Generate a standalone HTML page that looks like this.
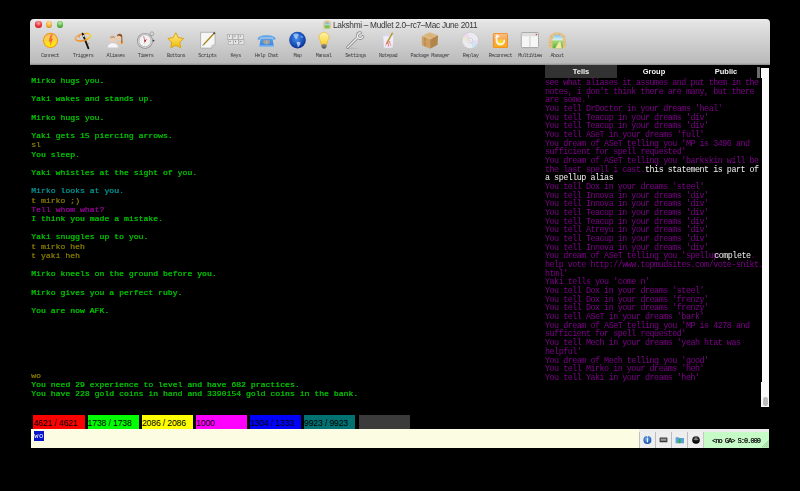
<!DOCTYPE html>
<html><head><meta charset="utf-8">
<style>
*{margin:0;padding:0;box-sizing:border-box}
html,body{width:800px;height:491px;background:#000;overflow:hidden;position:relative;font-family:"Liberation Sans",sans-serif}
.abs{position:absolute}
#win{position:absolute;left:30px;top:19px;width:740px;height:429px;background:#000}
#tb{position:absolute;left:30.3px;top:18.8px;width:739.3px;height:46px;border-radius:4px 4px 0 0;
 background:linear-gradient(#eeeeee 0,#e4e4e4 3px,#d0d0d0 22px,#bababa 44px,#8a8a8a 46px)}
#title{position:absolute;left:332.8px;top:20.4px;height:10px;line-height:10px;font-size:8.3px;letter-spacing:-0.3px;color:#383838;will-change:transform;white-space:nowrap}
.tl{position:absolute;top:21.4px;width:6.4px;height:6.4px;border-radius:50%}
.lbl{position:absolute;top:51.5px;font-family:"Liberation Mono",monospace;font-size:5.2px;letter-spacing:-0.52px;line-height:8px;color:#3c3c3c;white-space:nowrap;transform:translateX(-50%)}
#con{position:absolute;left:31px;top:76px;font-family:"Liberation Mono",monospace;font-size:8.1px;letter-spacing:0.025px;line-height:9.2px;color:#00ba00;white-space:pre;will-change:transform}
#con span,#con{text-shadow:0.4px 0 0 currentColor}
#rp{position:absolute;left:545.4px;top:79px;font-family:"Liberation Mono",monospace;font-size:8.4px;letter-spacing:-0.48px;line-height:8.667px;color:#7c0088;white-space:pre;will-change:transform}
.g{color:#00c000}.c{color:#008a8a}.o{color:#7c7200}.p{color:#8c008c}
#rp .w{color:#f0f0f0}.w{color:#fff}
.tab{position:absolute;top:65px;height:13px;width:72px;text-align:center;font-size:7.5px;font-weight:bold;color:#f4f4f4;line-height:14px;will-change:transform}
.gauge{position:absolute;top:415px;height:13.7px;width:51.3px;font-size:8.7px;letter-spacing:-0.17px;line-height:16px;color:#000;white-space:nowrap;overflow:hidden}
</style></head><body>
<div id="win"></div>
<div id="tb"></div>
<div class="tl" style="left:35.3px;background:radial-gradient(circle at 50% 30%,#ffb0b0,#e8303a 55%,#b01820)"></div>
<div class="tl" style="left:46px;background:radial-gradient(circle at 50% 30%,#ffe0a0,#f0b030 55%,#b07818)"></div>
<div class="tl" style="left:56.8px;background:radial-gradient(circle at 50% 30%,#c0f0b0,#58b840 55%,#2a7a1a)"></div>
<div id="title">Lakshmi – Mudlet 2.0–rc7–Mac June 2011</div>

<svg class="abs" style="left:0;top:0" width="800" height="70" viewBox="0 0 800 70">
<defs>
<linearGradient id="gCon" x1="0" y1="0" x2="0" y2="1"><stop offset="0" stop-color="#f7c57a"/><stop offset="0.5" stop-color="#fbd040"/><stop offset="1" stop-color="#fff000"/></linearGradient>
<radialGradient id="gGlobe" cx="0.45" cy="0.4" r="0.62"><stop offset="0" stop-color="#4a90e8"/><stop offset="0.6" stop-color="#1c56c0"/><stop offset="1" stop-color="#0a2a8a"/></radialGradient>
<linearGradient id="gStar" x1="0" y1="0" x2="0" y2="1"><stop offset="0" stop-color="#fde88e"/><stop offset="0.55" stop-color="#f8d040"/><stop offset="1" stop-color="#f0c000"/></linearGradient>
<linearGradient id="gBulb" x1="0" y1="0" x2="0" y2="1"><stop offset="0" stop-color="#fff4b0"/><stop offset="0.6" stop-color="#fae060"/><stop offset="1" stop-color="#f6cc30"/></linearGradient>
<linearGradient id="gRec" x1="0" y1="0" x2="0" y2="1"><stop offset="0" stop-color="#f8c08a"/><stop offset="0.5" stop-color="#f6a448"/><stop offset="1" stop-color="#f8b020"/></linearGradient>
<radialGradient id="gRecY" cx="0.5" cy="0.7" r="0.6"><stop offset="0" stop-color="#f8f000"/><stop offset="1" stop-color="#f8c040"/></radialGradient>
<radialGradient id="gCD" cx="0.5" cy="0.5" r="0.5"><stop offset="0" stop-color="#f4f4f4"/><stop offset="0.5" stop-color="#e0d8ec"/><stop offset="0.8" stop-color="#f0e8d8"/><stop offset="1" stop-color="#c8c8d0"/></radialGradient>
<linearGradient id="gBox" x1="0" y1="0" x2="1" y2="1"><stop offset="0" stop-color="#dcb070"/><stop offset="1" stop-color="#a8783c"/></linearGradient>
<linearGradient id="gSky" x1="0" y1="0" x2="0" y2="1"><stop offset="0" stop-color="#58a8e8"/><stop offset="0.45" stop-color="#b8e0f0"/><stop offset="0.55" stop-color="#70c040"/><stop offset="1" stop-color="#88c850"/></linearGradient>
<linearGradient id="gSky2" x1="0" y1="0" x2="0" y2="1"><stop offset="0" stop-color="#7cc4f0"/><stop offset="0.35" stop-color="#d4eef4"/><stop offset="0.5" stop-color="#9cd870"/><stop offset="1" stop-color="#58b038"/></linearGradient>
<linearGradient id="gRing" x1="0" y1="0" x2="1" y2="0"><stop offset="0" stop-color="#f8a018"/><stop offset="0.5" stop-color="#f48420"/><stop offset="1" stop-color="#f8d810"/></linearGradient>
<linearGradient id="gPhone" x1="0" y1="0" x2="0" y2="1"><stop offset="0" stop-color="#5aa0ec"/><stop offset="1" stop-color="#3a84e0"/></linearGradient>
</defs>
<!-- title icon arch -->
<path d="M323.2 28.6 V24.5 A3.9 4.2 0 0 1 331 24.5 V28.6 Z" fill="#e2c890"/>
<path d="M324.7 28.6 V25 A2.4 2.8 0 0 1 329.5 25 V28.6 Z" fill="url(#gSky)"/>
<!-- Connect -->
<circle cx="50.5" cy="40.4" r="7.6" fill="#f09a18"/>
<circle cx="50.5" cy="40.4" r="6.5" fill="url(#gCon)"/>
<path d="M50.6 34.4 L52.6 34.4 L51.4 38.6 L53 38.6 L50 46.4 L50.4 41.4 L48.6 41.4 Z" fill="#e86a28" opacity="0.9"/>
<!-- Triggers -->
<path d="M75.43 39.09 A7.80 3.30 -14 0 1 90.57 35.31" fill="none" stroke="url(#gRing)" stroke-width="1.5" opacity="0.8"/>
<line x1="82.6" y1="33.6" x2="88.4" y2="48.4" stroke="#141414" stroke-width="1.8" stroke-linecap="round"/>
<line x1="83.3" y1="35.3" x2="83.9" y2="36.8" stroke="#f4f4f4" stroke-width="1.5"/>
<path d="M90.57 35.31 A7.80 3.30 -14 0 1 75.43 39.09" fill="none" stroke="url(#gRing)" stroke-width="1.6"/>
<circle cx="79.2" cy="36.8" r="0.75" fill="#f07030"/><circle cx="88.6" cy="43.6" r="0.65" fill="#f07030"/>
<!-- Aliases -->
<path d="M116.8 44.2 Q117 40.6 120 40.4 Q123.8 40.6 124.4 44.2 Z" fill="#ecc49a"/>
<ellipse cx="119.5" cy="37" rx="2.5" ry="2.9" fill="#f2cca6"/>
<path d="M116.9 36.6 Q117 33.8 119.6 33.8 Q122.4 33.9 122.3 36.8 L122.4 43.2 L121.2 43.4 L121.4 37.6 Q120.6 35.6 118.6 35.8 Q117.4 36 116.9 36.6 Z" fill="#8c5430"/>
<path d="M107.8 47.4 Q108 43.4 112.7 43.2 Q117.8 43.4 118.2 47.4 Z" fill="#f6f6fa"/>
<ellipse cx="112.6" cy="38.9" rx="2.5" ry="3.1" fill="#f2cca8"/>
<path d="M110.1 38.4 Q110.2 35.6 112.7 35.7 Q115.2 35.7 115.1 38.4 Q113.6 37 110.1 38.4Z" fill="#c8a07a"/>
<!-- Timers -->
<circle cx="151.9" cy="33.7" r="1.9" fill="none" stroke="#a0a0a0" stroke-width="0.9"/>
<circle cx="145" cy="40.8" r="7.9" fill="#8c8c8c"/>
<circle cx="145" cy="40.8" r="7.2" fill="#d4d4d4"/>
<circle cx="145" cy="40.8" r="6.2" fill="#a8a8a8"/>
<circle cx="145" cy="40.8" r="5.7" fill="#f4f2f2"/>
<g stroke="#c8c8c8" stroke-width="0.4"><line x1="145" y1="35.6" x2="145" y2="36.6"/><line x1="145" y1="45" x2="145" y2="46"/><line x1="139.8" y1="40.8" x2="140.8" y2="40.8"/><line x1="149.2" y1="40.8" x2="150.2" y2="40.8"/></g>
<line x1="145" y1="40.8" x2="143.6" y2="36.4" stroke="#c02030" stroke-width="0.6"/>
<line x1="145" y1="40.8" x2="146.6" y2="39.4" stroke="#c02030" stroke-width="0.8"/>
<line x1="145" y1="40.8" x2="144.2" y2="43.6" stroke="#d05060" stroke-width="0.4"/>
<circle cx="145" cy="40.8" r="0.9" fill="#b01020"/>
<circle cx="153.5" cy="40.6" r="0.9" fill="#333"/>
<!-- Buttons star -->
<path d="M175.75 32.70 L178.22 37.60 L183.64 38.44 L179.74 42.30 L180.63 47.71 L175.75 45.20 L170.87 47.71 L171.76 42.30 L167.86 38.44 L173.28 37.60 Z" fill="url(#gStar)" stroke="#d8a200" stroke-width="0.9" stroke-linejoin="round"/>
<!-- Scripts -->
<path d="M200.6 32.3 H215 V44.6 L211.4 48.1 H200.6 Z" fill="#f6f6f6" stroke="#a2a2a2" stroke-width="0.7"/>
<path d="M211.4 48.1 Q211.8 45.6 215 44.6 Q212.6 44.2 211.4 45.2 Z" fill="#dcdcdc" stroke="#b0b0b0" stroke-width="0.3"/>
<line x1="203.6" y1="44.6" x2="214.2" y2="33.2" stroke="#c8a030" stroke-width="1.5"/>
<line x1="203.8" y1="44.4" x2="214" y2="33.4" stroke="#6a5a20" stroke-width="0.5"/>
<line x1="213.6" y1="33.8" x2="214.8" y2="32.6" stroke="#3a3a3a" stroke-width="1.6"/>
<line x1="202.6" y1="45.6" x2="203.8" y2="44.4" stroke="#909090" stroke-width="1.1"/>
<!-- Keys -->
<g fill="#e4e4e4" stroke="#9a9a9a" stroke-width="0.5">
<rect x="227.6" y="34.4" width="5" height="4.9"/><rect x="233" y="34.4" width="5" height="4.9"/><rect x="238.4" y="34.4" width="5" height="4.9"/>
<rect x="228.2" y="39.8" width="5" height="4.9"/><rect x="233.6" y="39.8" width="5" height="4.9"/><rect x="239" y="39.8" width="5" height="4.9"/>
</g>
<g fill="#777"><rect x="229" y="35.5" width="1" height="1.2"/><rect x="234.4" y="35.5" width="1" height="1.2"/><rect x="239.8" y="35.5" width="1" height="1.2"/><rect x="229.6" y="40.9" width="1" height="1.2"/><rect x="235" y="40.9" width="1" height="1.2"/><rect x="240.4" y="40.9" width="1" height="1.2"/></g>
<!-- Help chat phone -->
<path d="M260.6 38.4 H272.6 L273.8 46.6 H259.4 Z" fill="url(#gPhone)"/>
<rect x="259.4" y="45.4" width="14.4" height="1.2" fill="#88c4fa"/>
<path d="M257.6 39.6 Q257.2 35.4 266.6 35.2 Q276 35.4 275.6 39.6 L273.4 39.8 L272.8 37.6 H260.4 L259.8 39.8 Z" fill="#5aa4f0"/>
<ellipse cx="266.6" cy="42.1" rx="3.6" ry="2.3" fill="#9a9a9a"/>
<ellipse cx="266.6" cy="42.1" rx="2.8" ry="1.6" fill="#b8b8b8"/>
<circle cx="265.2" cy="42.1" r="0.7" fill="#6a6a6a"/><circle cx="268" cy="42.1" r="0.7" fill="#6a6a6a"/>
<!-- Map globe -->
<circle cx="297.5" cy="40.1" r="8.3" fill="url(#gGlobe)"/>
<path d="M293.2 34.6 Q295.6 32.8 298.4 34 Q299.2 35.6 297.6 37 Q297.8 38.6 296 39.2 Q294.2 37.8 293.2 34.6Z" fill="#b4d8fc" opacity="0.75"/>
<path d="M296.4 42 Q299 41.2 300.6 42.8 Q300.2 45.8 297.8 47.4 Q297.6 45 296.4 42Z" fill="#c0e0fc" opacity="0.8"/>
<path d="M300.4 35.4 Q302.6 35.6 303.4 37.4 Q302 38 300.8 37.2Z" fill="#a0ccf8" opacity="0.6"/>
<!-- Manual bulb -->
<path d="M324 32.3 A5 5.1 0 0 1 327.6 40.9 L326.6 44.6 H321.4 L320.4 40.9 A5 5.1 0 0 1 324 32.3Z" fill="url(#gBulb)" stroke="#f0b020" stroke-width="0.6"/>
<rect x="321.5" y="44.5" width="5" height="3.2" rx="0.7" fill="#6a6a6a"/>
<rect x="321.5" y="45.6" width="5" height="0.6" fill="#a0a0a0"/>
<rect x="322.6" y="47.4" width="2.8" height="1.1" fill="#3a3a3a"/>
<!-- Settings wrench -->
<ellipse cx="352.5" cy="48.4" rx="5.5" ry="0.7" fill="#a8a8a8" opacity="0.45"/>
<path d="M347.6 47.4 L357 38 M362.83 36.56 A2.8 2.8 0 1 1 360.69 32.84" fill="none" stroke="#8e8e8e" stroke-width="2.9" stroke-linecap="round"/>
<path d="M347.6 47.4 L357 38 M362.83 36.56 A2.8 2.8 0 1 1 360.69 32.84" fill="none" stroke="#f0f0f0" stroke-width="1.3" stroke-linecap="round"/>
<!-- Notepad cup -->
<path d="M382.9 35.4 Q388.3 34.2 393.7 35.4 L392.8 47.6 Q388.3 48.6 383.8 47.6 Z" fill="#f0eef8" stroke="#d0cce0" stroke-width="0.5"/>
<ellipse cx="388.3" cy="35.5" rx="5.3" ry="0.9" fill="#dcd8f0"/>
<line x1="386.4" y1="44.2" x2="392.6" y2="32.6" stroke="#c8b040" stroke-width="1.6"/>
<line x1="386.6" y1="43.8" x2="392.4" y2="33" stroke="#5a5020" stroke-width="0.5" stroke-dasharray="0.8 0.6"/>
<path d="M385.6 46 L387.6 40.6 L388.8 46.4 M388.2 46.8 L389.6 41 L391 46.2" fill="none" stroke="#e86a78" stroke-width="0.7" opacity="0.85"/>
<!-- Package box -->
<path d="M421.8 36.2 L429.8 32.2 L438 35.3 L430.2 39.4 Z" fill="#dcb87e"/>
<path d="M421.8 36.2 L430.2 39.4 L430.2 48.8 L422 45.2 Z" fill="#cf9e60"/>
<path d="M430.2 39.4 L438 35.3 L437.6 44.8 L430.2 48.8 Z" fill="#b3844a"/>
<path d="M425.6 33.9 L433.6 37.2" stroke="#c4a070" stroke-width="0.5"/>
<path d="M424.8 37.4 L425.2 46.4" stroke="#a88050" stroke-width="1"/>
<path d="M424.8 41.5 L425.6 41.8" stroke="#e8d0a0" stroke-width="0.6"/>
<!-- Replay CD -->
<circle cx="470.3" cy="40.4" r="8.3" fill="#ecebf0" stroke="#b8b8c0" stroke-width="0.5"/>
<path d="M470.3 40.4 L463.2 36.2 A8 8 0 0 1 468 32.6 Z" fill="#f0c0e0" opacity="0.38"/>
<path d="M470.3 40.4 L462.4 40.8 A8 8 0 0 1 463.2 36.2 Z" fill="#e8e8a0" opacity="0.35"/>
<path d="M470.3 40.4 L477.4 44.6 A8 8 0 0 1 472.6 48.2 Z" fill="#a0d8f0" opacity="0.38"/>
<path d="M470.3 40.4 L478.2 40 A8 8 0 0 1 477.4 44.6 Z" fill="#e0c0f0" opacity="0.35"/>
<circle cx="470.3" cy="40.4" r="2.4" fill="#fafafa" stroke="#b0b0b8" stroke-width="0.5"/>
<circle cx="470.3" cy="40.4" r="1" fill="#d0d0d4"/>
<!-- Reconnect -->
<rect x="492.9" y="32.9" width="15.1" height="15.1" rx="1.6" fill="#f28a18"/>
<rect x="493.7" y="33.7" width="13.5" height="13.5" rx="1" fill="url(#gRec)"/>
<circle cx="500.4" cy="42" r="3.6" fill="url(#gRecY)"/>
<path d="M496.6 37.2 V41.3 A3.9 3.9 0 0 0 504.3 40.4" fill="none" stroke="#fbf4ea" stroke-width="1.8" stroke-linecap="round"/>
<path d="M495.2 38.4 L496.6 34.2 L500 36.4 Z" fill="#fbf4ea"/>
<!-- MultiView -->
<rect x="521.3" y="32.5" width="17.2" height="15" rx="0.8" fill="#f6f6f6" stroke="#a4a4a4" stroke-width="0.9"/>
<rect x="521.8" y="33" width="16.2" height="3.3" fill="#dedede"/>
<circle cx="536.4" cy="34.5" r="0.8" fill="#e23a3a"/>
<rect x="529.4" y="36.3" width="1.1" height="10.8" fill="#cfcfcf"/>
<line x1="521.5" y1="48.2" x2="538.4" y2="48.2" stroke="#b4b4b4" stroke-width="0.6" opacity="0.6"/>
<!-- About arch -->
<path d="M548.6 48.2 V40.2 A8.7 8 0 0 1 566 40.2 V48.2 Z" fill="#e4c48a"/>
<path d="M552.6 48.2 V39.6 A5.1 4.9 0 0 1 562.8 39.6 V48.2 Z" fill="url(#gSky2)"/>
<path d="M555.2 48.2 L559.2 41.8 L560.4 41.8 L561.8 48.2 Z" fill="#f4e8a2"/>
<g fill="none" stroke="#c9a468" stroke-width="0.45">
<path d="M550 36 L552.8 37.6 M554.2 33.2 L555.4 35.4 M560 33 L559.4 35.2 M565 35.8 L562.4 37.4 M548.6 42.4 H552.6 M562.8 42.4 H566 M548.6 45.4 H552.6 M562.8 45.4 H566"/>
</g>
</svg>
<div class="lbl" style="left:50px">Connect</div>
<div class="lbl" style="left:83px">Triggers</div>
<div class="lbl" style="left:115.6px">Aliases</div>
<div class="lbl" style="left:145.6px">Timers</div>
<div class="lbl" style="left:176px">Buttons</div>
<div class="lbl" style="left:207.4px">Scripts</div>
<div class="lbl" style="left:235.6px">Keys</div>
<div class="lbl" style="left:266.4px">Help Chat</div>
<div class="lbl" style="left:297.4px">Map</div>
<div class="lbl" style="left:323.6px">Manual</div>
<div class="lbl" style="left:355.6px">Settings</div>
<div class="lbl" style="left:388px">Notepad</div>
<div class="lbl" style="left:430px">Package Manager</div>
<div class="lbl" style="left:470.6px">Replay</div>
<div class="lbl" style="left:500.4px">Reconnect</div>
<div class="lbl" style="left:530px">MultiView</div>
<div class="lbl" style="left:557px">About</div>

<div id="con">Mirko hugs you.

Yaki wakes and stands up.

Mirko hugs you.

Yaki gets 15 piercing arrows.
<span class="o">sl</span>
You sleep.

Yaki whistles at the sight of you.

<span class="c">Mirko looks at you.</span>
<span class="o">t mirko ;)</span>
<span class="p">Tell whom what?</span>
I think you made a mistake.

Yaki snuggles up to you.
<span class="o">t mirko heh</span>
<span class="o">t yaki heh</span>

Mirko kneels on the ground before you.

Mirko gives you a perfect ruby.

You are now AFK.






<span class="o">wo</span>
You need 29 experience to level and have 682 practices.
You have 228 gold coins in hand and 3390154 gold coins in the bank.</div>

<div class="tab" style="left:545px;background:#323232">Tells</div>
<div class="tab" style="left:617.5px">Group</div>
<div class="tab" style="left:690px">Public</div>
<div class="abs" style="left:757px;top:67.4px;width:3.2px;height:10.5px;background:#6c6c6c"></div>
<div class="abs" style="left:761px;top:68px;width:8.1px;height:10px;background:#fafafa"></div>
<div class="abs" style="left:762px;top:78px;width:7.1px;height:304px;background:#fafafa"></div>
<div class="abs" style="left:761.2px;top:381.8px;width:7.9px;height:24.8px;background:#fafafa"></div>
<div class="abs" style="left:763px;top:396.9px;width:4.5px;height:8.9px;border-radius:2.2px;background:#bdbdbd"></div>

<div id="rp">see what aliases it assumes and put them in the
notes, i don't think there are many, but there
are some.'
You tell DrDoctor in your dreams 'heal'
You tell Teacup in your dreams 'div'
You tell Teacup in your dreams 'div'
You tell ASeT in your dreams 'full'
You dream of ASeT telling you 'MP is 3496 and
sufficient for spell requested'
You dream of ASeT telling you 'barkskin will be
the last spell i cast.<span class="w">this statement is part of</span>
<span class="w">a spellup alias</span>
You tell Dox in your dreams 'steel'
You tell Innova in your dreams 'div'
You tell Innova in your dreams 'div'
You tell Teacup in your dreams 'div'
You tell Teacup in your dreams 'div'
You tell Atreyu in your dreams 'div'
You tell Teacup in your dreams 'div'
You tell Innova in your dreams 'div'
You dream of ASeT telling you 'spellup<span class="w" style="margin-left:-3.6px">complete</span>.
help vote http://www.topmudsites.com/vote-snikt.
html'
Yaki tells you 'come n'
You tell Dox in your dreams 'steel'
You tell Dox in your dreams 'frenzy'
You tell Dox in your dreams 'frenzy'
You tell ASeT in your dreams 'bark'
You dream of ASeT telling you 'MP is 4278 and
sufficient for spell requested'
You tell Mech in your dreams 'yeah htat was
helpful'
You dream of Mech telling you 'good'
You tell Mirko in your dreams 'heh'
You tell Yaki in your dreams 'heh'</div>

<div class="gauge" style="left:33.4px;background:#ff0000">4621 / 4621</div>
<div class="gauge" style="left:87.6px;background:#00ff00">1738 / 1738</div>
<div class="gauge" style="left:141.9px;background:#ffff00">2086 / 2086</div>
<div class="gauge" style="left:196.1px;background:#ff00ff">1000</div>
<div class="gauge" style="left:250.2px;background:#0000ff">1304 / 1333</div>
<div class="gauge" style="left:304px;background:#007272">9923 / 9923</div>
<div class="gauge" style="left:358.8px;background:#3b3b3b"></div>

<div class="abs" style="left:30.6px;top:428.9px;width:608.4px;height:19.1px;background:#fcfce3"></div>
<div class="abs" style="left:33.5px;top:431.3px;width:10px;height:9.6px;background:#0a14c8;color:#fff;font-family:'Liberation Mono',monospace;font-size:7px;letter-spacing:0.7px;line-height:11px;padding-left:0.2px;will-change:transform">wo</div>
<div class="abs" style="left:639px;top:429px;width:130.3px;height:3px;background:#ececec"></div>
<div class="abs" style="left:639px;top:432px;width:65px;height:16px;background:#eeeeee"></div>
<div class="abs" style="left:639px;top:432px;width:0.8px;height:16px;background:#c0c0c0"></div>
<div class="abs" style="left:655px;top:432px;width:1px;height:16px;background:#bcbcbc"></div>
<div class="abs" style="left:671.2px;top:432px;width:1px;height:16px;background:#bcbcbc"></div>
<div class="abs" style="left:687.4px;top:432px;width:1px;height:16px;background:#bcbcbc"></div>
<div class="abs" style="left:703.4px;top:432px;width:0.8px;height:16px;background:#c8c8c8"></div>
<svg class="abs" style="left:639px;top:429px" width="131" height="19" viewBox="639 429 131 19">
<defs><radialGradient id="gInfo" cx="0.45" cy="0.35" r="0.6"><stop offset="0" stop-color="#7ab4f0"/><stop offset="1" stop-color="#1650b0"/></radialGradient>
<radialGradient id="gBall" cx="0.5" cy="0.3" r="0.6"><stop offset="0" stop-color="#888"/><stop offset="0.5" stop-color="#222"/><stop offset="1" stop-color="#000"/></radialGradient></defs>
<circle cx="647.4" cy="440" r="4" fill="url(#gInfo)"/>
<rect x="646.9" y="436.3" width="1" height="1" fill="#fff"/><rect x="646.9" y="438.2" width="1" height="4.2" fill="#fff"/>
<rect x="659.6" y="437.6" width="7.8" height="4.6" rx="0.5" fill="#3a3a3a"/>
<rect x="660.6" y="438.6" width="5.8" height="2.2" fill="#9a9a9a"/>
<path d="M675.6 437.2 h3 l0.8 0.8 h4.6 v5.2 h-8.4 Z" fill="#5aa0e0"/>
<path d="M679.6 443.4 l2.2 -2.2 h-1.3 v-2.4 h-1.8 v2.4 h-1.3 Z" fill="#30b030"/>
<circle cx="696" cy="440" r="3.8" fill="url(#gBall)"/>
<rect x="693.6" y="439.2" width="4.8" height="0.8" fill="#bbb" opacity="0.6"/>
</svg>
<div class="abs" style="left:704px;top:432px;width:65.3px;height:15.8px;background:#c6fac6"></div>
<svg class="abs" style="left:760px;top:440px" width="10" height="8" viewBox="760 440 10 8"><path d="M761.6 447.6 L769 440.6 M763.6 447.6 L769 442.6 M765.6 447.6 L769 444.6 M767.6 447.6 L769 446.6" stroke="#7a9a7a" stroke-width="0.55"/></svg>
<div class="abs" style="left:711.6px;top:437px;font-family:'Liberation Mono',monospace;font-size:6.9px;letter-spacing:-0.95px;text-shadow:0.3px 0 0 #1a1a1a;line-height:8px;color:#1a1a1a;white-space:nowrap;will-change:transform">&lt;no GA&gt; S:0.000</div>
</body></html>
